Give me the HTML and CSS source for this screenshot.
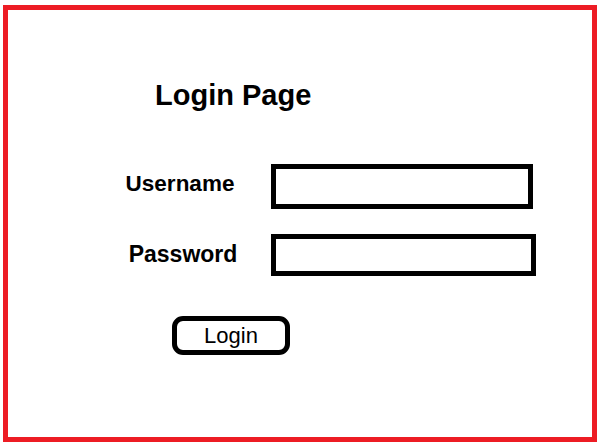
FILE: index.html
```html
<!DOCTYPE html>
<html lang="en">
<head>
  <meta charset="UTF-8">
  <meta name="viewport" content="width=device-width, initial-scale=1.0">
  <title>Login Page</title>
  <link rel="stylesheet" href="styles.css">
</head>
<body>
  <div class="frame">
    <h1>Login Page</h1>

    <!-- поля входа -->
    <form class="login-form" onsubmit="return false;">
      <div class="row">
        <label for="username" class="label-user">Username</label>
        <input type="text" id="username" class="field field-user">
      </div>
      <div class="row">
        <label for="password" class="label-pass">Password</label>
        <input type="password" id="password" class="field field-pass">
      </div>
      <button type="submit" class="login-btn">Login</button>
    </form>
  </div>
</body>
</html>
```

FILE: styles.css
```css
* { box-sizing: border-box; }
body {
  margin: 0;
  padding: 0;
  background: #ffffff;
  font-family: 'Liberation Sans', Arial, sans-serif;
  color: #000000;
}
.frame {
  margin: 5px 0 0 3px;
  width: 594px;
  height: 437px;
  border: 5px solid #ed1c24;
  padding: 71px 0 0 0;
}
h1 {
  margin: 0 0 0 147px;
  font-size: 29px;
  line-height: 29px;
  font-weight: bold;
}
.login-form {
  margin-top: 54px;
}
.row {
  display: flex;
  align-items: center;
  padding-left: 112px;
  margin-bottom: 25px;
}
.row label {
  width: 120px;
  margin-right: 31px;
  text-align: center;
  font-size: 22.5px;
  font-weight: bold;
}
.row .label-user {
  padding-bottom: 5px;
}
.row .label-pass {
  padding-left: 6px;
  padding-bottom: 2px;
  font-size: 23px;
}
.field {
  border: 5px solid #000000;
  border-radius: 0;
  background: #ffffff;
  outline: none;
  padding: 0 8px;
  font-size: 18px;
  font-family: 'Liberation Sans', Arial, sans-serif;
}
.field-user {
  width: 262px;
  height: 45px;
}
.field-pass {
  width: 265px;
  height: 42px;
}
.login-btn {
  display: block;
  margin: 40px 0 0 164px;
  width: 118px;
  height: 39px;
  border: 5px solid #000000;
  border-radius: 11px;
  background: #ffffff;
  color: #000000;
  font-size: 22px;
  font-family: 'Liberation Sans', Arial, sans-serif;
  padding: 0;
  cursor: pointer;
}
```
